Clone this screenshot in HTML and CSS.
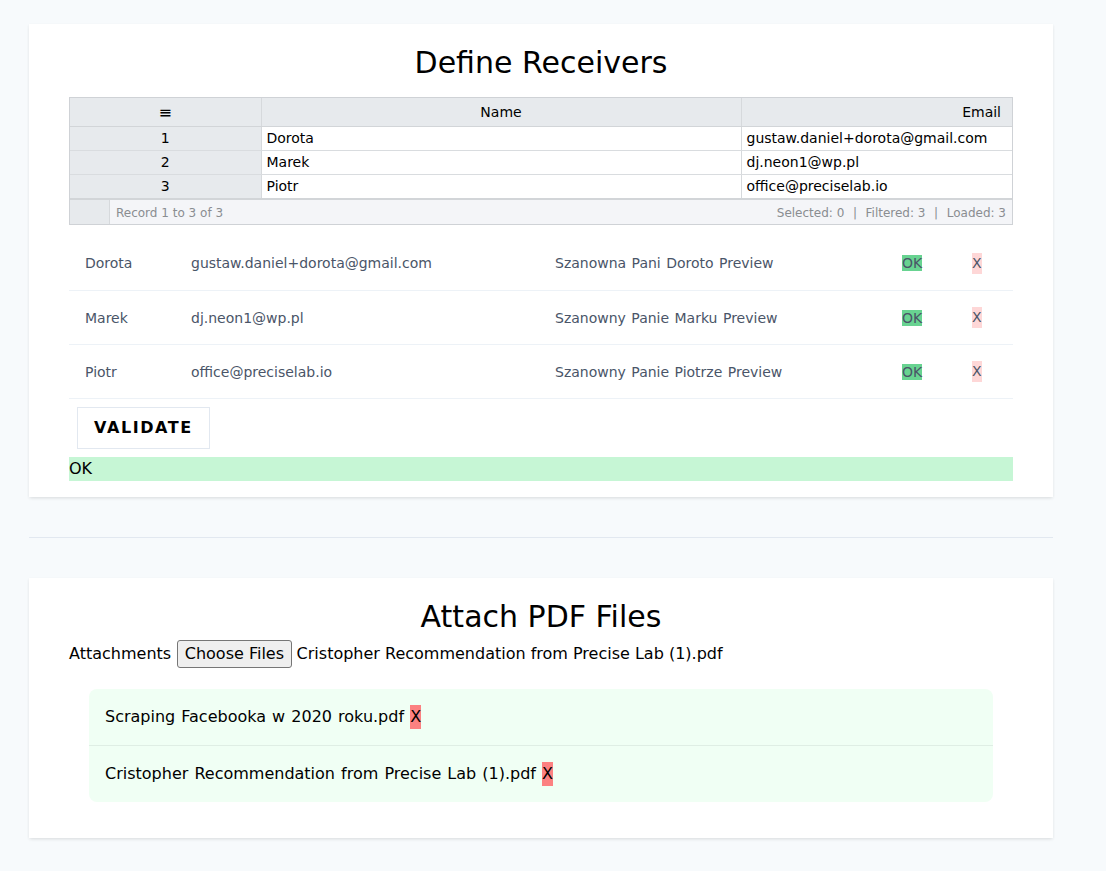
FILE: index.html
```html
<!DOCTYPE html>
<html lang="pl">
<head>
<meta charset="utf-8">
<title>Define Receivers</title>
<link rel="stylesheet" href="styles.css">
</head>
<body>
<div class="page">
  <section class="card card-receivers">
    <h1 class="title">Define Receivers</h1>
    <div class="grid">
      <table class="grid-table">
        <colgroup><col class="c-num"><col class="c-name"><col class="c-email"></colgroup>
        <thead>
          <tr><th class="th-num">&#8801;</th><th class="th-name">Name</th><th class="th-email">Email</th></tr>
        </thead>
        <tbody>
          <tr><td class="num">1</td><td>Dorota</td><td>gustaw.daniel+dorota@gmail.com</td></tr>
          <tr><td class="num">2</td><td>Marek</td><td>dj.neon1@wp.pl</td></tr>
          <tr><td class="num">3</td><td>Piotr</td><td>office@preciselab.io</td></tr>
        </tbody>
      </table>
      <div class="grid-footer">
        <div class="gf-corner"></div>
        <div class="gf-record">Record 1 to 3 of 3</div>
        <div class="gf-stats">Selected: 0<span class="pipe">|</span>Filtered: 3<span class="pipe">|</span>Loaded: 3</div>
      </div>
    </div>
    <table class="list">
      <colgroup><col class="l-name"><col class="l-email"><col class="l-prev"><col class="l-ok"><col class="l-x"></colgroup>
      <tbody>
        <tr><td>Dorota</td><td>gustaw.daniel+dorota@gmail.com</td><td class="prev">Szanowna Pani Doroto Preview</td><td><span class="ok">OK</span></td><td><span class="x">X</span></td></tr>
        <tr><td>Marek</td><td>dj.neon1@wp.pl</td><td class="prev">Szanowny Panie Marku Preview</td><td><span class="ok">OK</span></td><td><span class="x">X</span></td></tr>
        <tr><td>Piotr</td><td>office@preciselab.io</td><td class="prev">Szanowny Panie Piotrze Preview</td><td><span class="ok">OK</span></td><td><span class="x">X</span></td></tr>
      </tbody>
    </table>
    <button class="validate">Validate</button>
    <div class="status">OK</div>
  </section>

  <hr class="sep">

  <section class="card card-attach">
    <h1 class="title">Attach PDF Files</h1>
    <div class="file-row">
      <label>Attachments</label> <button class="choose">Choose Files</button> <span class="chosen">Cristopher Recommendation from Precise Lab (1).pdf</span>
    </div>
    <ul class="files">
      <li>Scraping Facebooka w 2020 roku.pdf <span class="rm">X</span></li>
      <li>Cristopher Recommendation from Precise Lab (1).pdf <span class="rm">X</span></li>
    </ul>
  </section>
</div>
</body>
</html>
```

FILE: styles.css
```css
* { box-sizing: border-box; }
html, body { margin: 0; padding: 0; }
body {
  background: #f7fafc;
  font-family: "DejaVu Sans", sans-serif;
  font-size: 16px;
  line-height: 1.5;
  color: #000;
}
.page {
  width: 1024px;
  margin-left: 29px;
  padding: 24px 0 33px;
}
.card {
  background: #fff;
  box-shadow: 0 2px 4px -1px rgba(0,0,0,0.08), 0 1px 3px rgba(0,0,0,0.06);
  padding: 21px 40px 16px;
}
.title {
  margin: 0;
  font-size: 30px;
  line-height: 36px;
  font-weight: normal;
  text-align: center;
}
.card-receivers .title { margin-bottom: 16px; }

/* grid */
.grid {
  border: 1px solid #cfd2d6;
  font-size: 14px;
  line-height: 23px;
}
.grid-table {
  width: 100%;
  border-collapse: collapse;
  table-layout: fixed;
}
.c-num { width: 191px; }
.c-name { width: 480px; }
.grid-table th {
  background: #e7eaed;
  font-weight: normal;
  height: 28px;
  padding: 2px 11px 0;
  border-right: 1px solid #d6d9dc;
  border-bottom: 1px solid #d2d5d8;
}
.grid-table th:last-child, .grid-table td:last-child { border-right: none; }
.th-num, .th-name { text-align: center; }
.th-num { font-size: 16px; font-weight: bold; }
.th-email { text-align: right; }
.grid-table td {
  padding: 0 5px;
  height: 24px;
  border-right: 1px solid #d6d9dc;
  border-bottom: 1px solid #d9dcdf;
  white-space: nowrap;
}
.grid-table td.num {
  background: #e7eaed;
  text-align: center;
}
.grid-table tbody tr:last-child td { border-bottom: 2px solid #d2d5d8; }
.grid-footer {
  display: flex;
  background: #f4f5f8;
  height: 24px;
  font-size: 12px;
  line-height: 24px;
  color: #8a8d91;
}
.gf-corner {
  width: 40px;
  background: #e7eaed;
  border-right: 1px solid #d6d9dc;
}
.gf-record { padding: 1px 0 0 6px; flex: 1; }
.gf-stats { padding: 1px 6px 0 0; }
.pipe { margin: 0 8.6px; }

/* list */
.list {
  width: 100%;
  margin-top: 12px;
  border-collapse: collapse;
  table-layout: fixed;
  font-size: 14px;
  line-height: 20px;
  color: #4a5568;
}
.l-name { width: 106px; }
.l-email { width: 364px; }
.l-prev { width: 347px; }
.l-ok { width: 70px; }
.l-x { width: 57px; }
.list td {
  padding: 16px;
  border-bottom: 1px solid #edf2f7;
  white-space: nowrap;
  vertical-align: middle;
  height: 54px;
}
.list td.prev { word-spacing: 1px; }
.ok { background: #68d391; }
.x {
  display: inline-block;
  background: #fed7d7;
  line-height: 21px;
}

.validate {
  display: block;
  margin: 8px;
  padding: 8px 16px;
  background: #fff;
  border: 1px solid #e2e8f0;
  font-family: inherit;
  font-size: 16px;
  line-height: 24px;
  font-weight: bold;
  text-transform: uppercase;
  letter-spacing: 0.1em;
  color: #000;
}
.status {
  background: #c6f6d5;
  line-height: 24px;
}

.sep {
  margin: 40px 0;
  border: 0;
  border-top: 1px solid #e2e8f0;
  height: 0;
}

.card-attach { padding-bottom: 16px; }
.file-row { line-height: 24px; margin-top: 5px; }
.choose {
  font-family: inherit;
  font-size: 16px;
  line-height: 24px;
  padding: 1px 6.5px;
  margin-left: 1px;
  background: #efefef;
  border: 1px solid #767676;
  border-radius: 3px;
  color: #000;
}
.files {
  list-style: none;
  margin: 21px 20px 20px;
  padding: 0;
  background: #f0fff4;
  border-radius: 8px;
}
.files li {
  padding: 16px;
  line-height: 24px;
  border-bottom: 1px solid #dfeee4;
  word-spacing: 1px;
}
.files li:last-child { border-bottom: none; }
.rm {
  display: inline-block;
  background: #fc8181;
  line-height: 24px;
  word-spacing: 0;
}
```
